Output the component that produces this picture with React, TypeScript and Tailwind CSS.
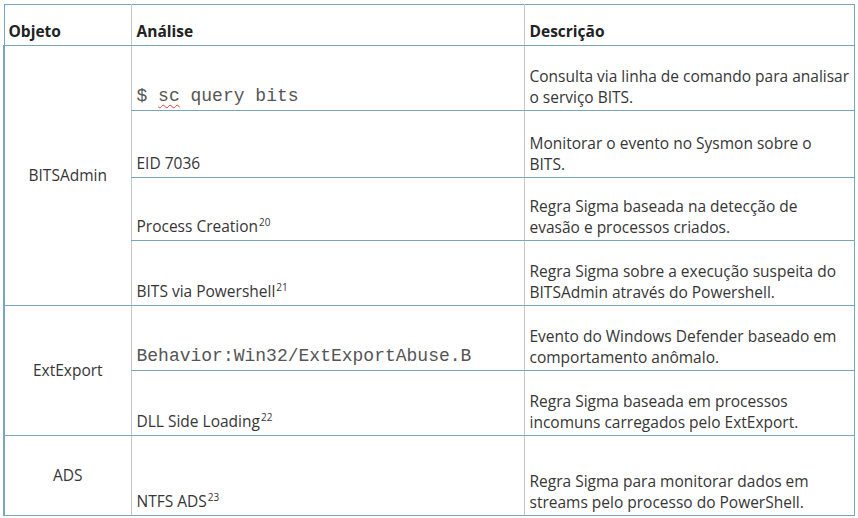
function Sup({ n }: { n: string }) {
  return <sup className="text-[10px] relative -top-[6px] align-baseline ml-[1px] leading-none">{n}</sup>;
}

function Lines({ a, b }: { a: string; b: string }) {
  return (
    <>
      <span className="block leading-[21px]">{a}</span>
      <span className="block leading-[21px]">{b}</span>
    </>
  );
}

const cellA = 'border-b border-b-[#78a7bd] border-l border-l-[#c8c8c8] align-bottom px-[5px] pb-[4px] whitespace-nowrap';
const cellD = 'border-b border-b-[#78a7bd] border-l border-l-[#c8c8c8] align-bottom px-[5px] pb-[2px] whitespace-nowrap';
const cellO = 'border-b border-b-[#78a7bd] border-l-2 border-l-[#78a7bd] align-middle text-center';
const mono = 'font-["Liberation_Mono",monospace] text-[18px] text-[#555]';

export default function App() {
  return (
    <div className="w-[858px] h-[518px] bg-white pt-[4px] pl-[3px] font-['Open_Sans',sans-serif] text-[15.5px] leading-[19px] text-[#363636]">
      <table className="border-collapse table-fixed w-[850px] border-t border-r border-[#78a7bd]">
        <colgroup>
          <col className="w-[127px]" />
          <col className="w-[393px]" />
          <col className="w-[330px]" />
        </colgroup>
        <tbody>
          <tr className="h-[41px] font-bold text-[#222]">
            <td className="border-b border-b-[#78a7bd] border-l border-l-[#78a7bd] align-bottom px-[4px] pb-[4px]">Objeto</td>
            <td className={cellA}>Análise</td>
            <td className="border-b border-b-[#78a7bd] border-l border-l-[#c8c8c8] align-bottom px-[5px] pb-[4px]">Descrição</td>
          </tr>
          <tr className="h-[65px]">
            <td rowSpan={4} className={cellO}>BITSAdmin</td>
            <td className={cellA}>
              <span className={mono}>
                $ <span className="underline decoration-wavy decoration-[#e04040] decoration-1 underline-offset-[3px]">sc</span> query bits
              </span>
            </td>
            <td className={cellD}><Lines a="Consulta via linha de comando para analisar" b="o serviço BITS." /></td>
          </tr>
          <tr className="h-[67px]">
            <td className={cellA}>EID 7036</td>
            <td className={cellD}><Lines a="Monitorar o evento no Sysmon sobre o" b="BITS." /></td>
          </tr>
          <tr className="h-[63px]">
            <td className={cellA}>Process Creation<Sup n="20" /></td>
            <td className={cellD}><Lines a="Regra Sigma baseada na detecção de" b="evasão e processos criados." /></td>
          </tr>
          <tr className="h-[65px]">
            <td className={cellA}>BITS via Powershell<Sup n="21" /></td>
            <td className={cellD}><Lines a="Regra Sigma sobre a execução suspeita do" b="BITSAdmin através do Powershell." /></td>
          </tr>
          <tr className="h-[65px]">
            <td rowSpan={2} className={cellO}>ExtExport</td>
            <td className={cellA}>
              <span className={mono}>Behavior:Win32/ExtExportAbuse.B</span>
            </td>
            <td className={cellD}><Lines a="Evento do Windows Defender baseado em" b="comportamento anômalo." /></td>
          </tr>
          <tr className="h-[65px]">
            <td className={cellA}>DLL Side Loading<Sup n="22" /></td>
            <td className={cellD}><Lines a="Regra Sigma baseada em processos" b="incomuns carregados pelo ExtExport." /></td>
          </tr>
          <tr className="h-[80px]">
            <td className={cellO}>ADS</td>
            <td className={cellA}>NTFS ADS<Sup n="23" /></td>
            <td className={cellD}><Lines a="Regra Sigma para monitorar dados em" b="streams pelo processo do PowerShell." /></td>
          </tr>
        </tbody>
      </table>
    </div>
  );
}
